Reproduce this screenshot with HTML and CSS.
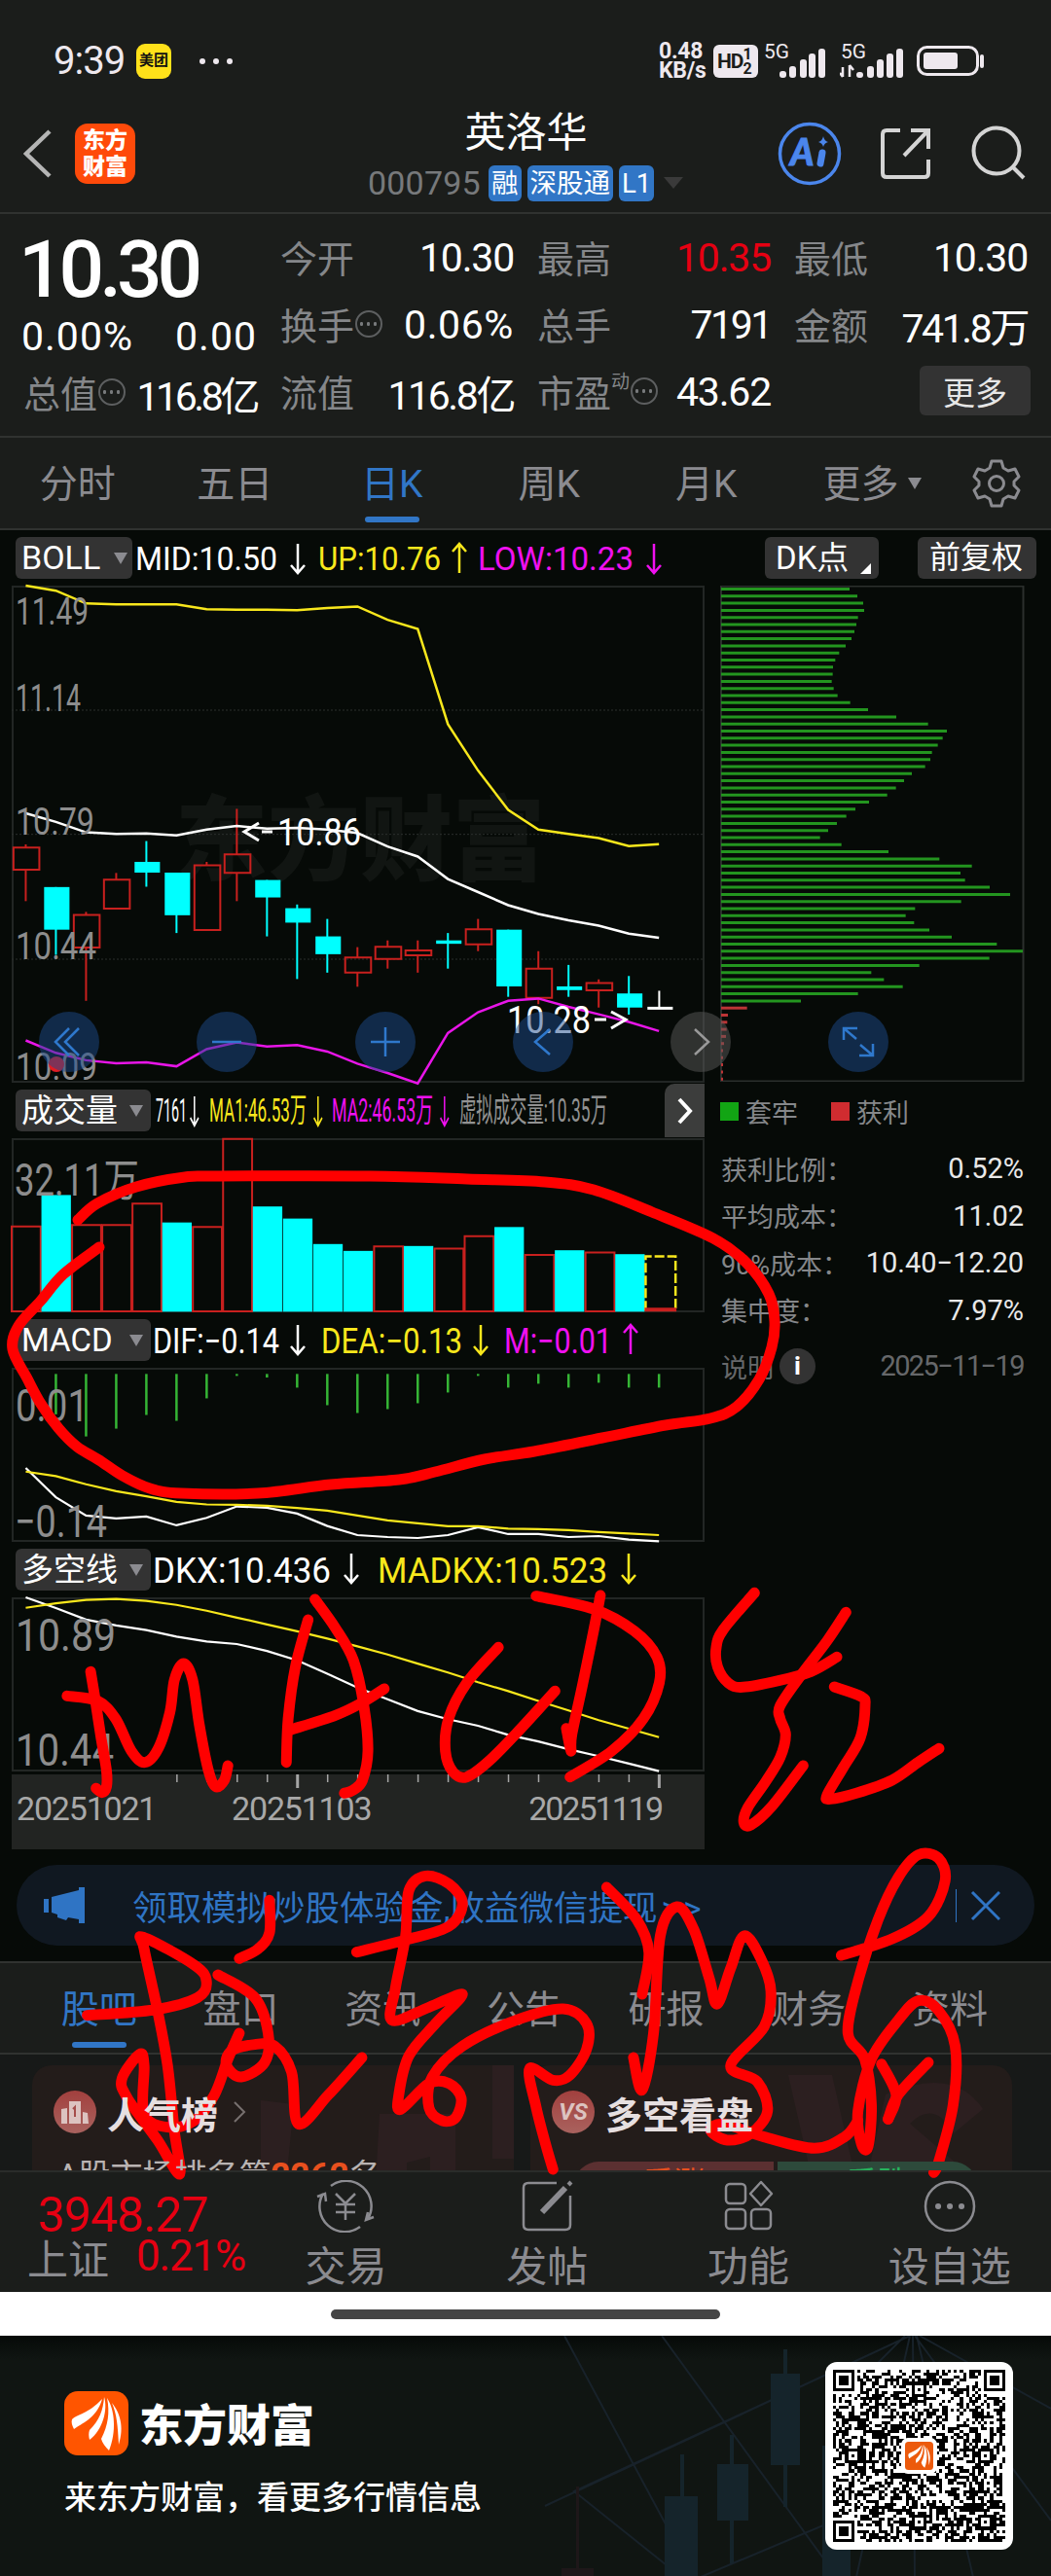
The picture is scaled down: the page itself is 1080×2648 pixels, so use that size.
FILE: index.html
```html
<!DOCTYPE html>
<html lang="zh-CN">
<head>
  <meta charset="UTF-8" />
  <title>英洛华 000795</title>
  <link rel="stylesheet" href="styles.css">
</head>
<body>
  <svg class="defs" width="0" height="0">
    <defs>
      <path id="down" d="M8 0V30M1 22L8 30L15 22" fill="none" stroke="currentColor" stroke-width="2.5" />
      <path id="up" d="M8 30V0M1 8L8 0L15 8" fill="none" stroke="currentColor" stroke-width="2.5" />
      <path id="feather" d="M8 29C14 23 24 24 39 8C34 26 22 31 10 39C8 35 7 32 8 29ZM41 6C45 18 40 40 26 50C25 46 25 43 26 40C36 30 40 20 41 6ZM44 7C52 19 54 42 46 61C42 57 39 53 38 49C45 35 47 22 44 7ZM49 12C57 22 62 36 56 55C55 35 54 24 49 12Z" />
    </defs>
  </svg>

  <div class="status">
    <span class="time">9:39</span>
    <span class="meituan">美团</span>
    <span class="dots"><i></i><i></i><i></i></span>
    <span class="speed">0.48<br>KB/s</span>
    <span class="hd">HD<small>1<br>2</small></span>
    <svg class="signal" width="66" height="42" viewBox="0 0 66 42" fill="#eee8ee">
      <text x="0" y="18" font-size="20" textLength="26">5G</text>
      <rect x="16" y="31" width="7" height="7" rx="3" /><rect x="26" y="26" width="7" height="12" rx="3" /><rect x="37" y="19" width="7" height="19" rx="3" /><rect x="46" y="13" width="7" height="25" rx="3" /><rect x="56" y="8" width="7" height="30" rx="3" />
    </svg>
    <svg class="signal two" width="66" height="42" viewBox="0 0 66 42" fill="#eee8ee">
      <text x="1" y="18" font-size="20" textLength="26">5G</text>
      <path d="M3 27V37M3 37L0 33M10 37V25M10 25L14 30" stroke="#eee8ee" stroke-width="2.5" fill="none" />
      <rect x="17" y="32" width="7" height="6" rx="3" /><rect x="28" y="26" width="7" height="12" rx="3" /><rect x="38" y="19" width="7" height="19" rx="3" /><rect x="48" y="13" width="7" height="25" rx="3" /><rect x="58" y="8" width="7" height="30" rx="3" />
    </svg>
    <svg width="70" height="32" viewBox="0 0 70 32"><rect x="1.5" y="1.5" width="61" height="28" rx="9" fill="none" stroke="#eee8ee" stroke-width="3" /><rect x="7" y="7" width="35" height="17" rx="3" fill="#eee8ee" /><path d="M67 11V21" stroke="#eee8ee" stroke-width="4" stroke-linecap="round" /></svg>
  </div>

  <header class="title">
    <svg class="back" width="30" height="52" viewBox="0 0 30 52"><path d="M27 3L3 26L27 49" fill="none" stroke="#b5b5b5" stroke-width="4.5" /></svg>
    <div class="app-logo">东方<br>财富</div>
    <div class="stock">
      <h1>英洛华</h1>
      <div class="code"><span>000795</span><b>融</b><b>深股通</b><b>L1</b><i class="tri dark"></i></div>
    </div>
    <svg class="tools" width="258" height="70" viewBox="0 0 258 70" fill="none" stroke="#d4d4d4" stroke-width="4">
      <circle cx="33" cy="35" r="30.5" stroke="#4b86ec" stroke-width="3.5" />
      <text class="ai" x="13" y="47">A</text>
      <path d="M46 34L44 45" stroke="#4b86ec" stroke-width="7" stroke-linecap="round" /><path d="M47 17Q48 22 52 23Q48 24 47 28Q46 24 42 23Q46 22 47 17Z" fill="#4b86ec" stroke="none" />
      <path d="M126 11H112Q108 11 108 15V55Q108 59 112 59H151Q155 59 155 55V41M137 11H155V30M154 12L130 37" />
      <circle cx="225" cy="32" r="23.5" /><path d="M242 49L253 60" />
    </svg>
  </header>

  <section class="quote">
    <div class="col first">
      <div class="price">10.30</div>
      <div class="change"><span>0.00%</span><span>0.00</span></div>
      <div class="item"><label>总值</label><i class="more"></i><span class="tight">116.8亿</span></div>
    </div>
    <div class="col">
      <div class="item"><label>今开</label><span>10.30</span></div>
      <div class="item"><label>换手</label><i class="more"></i><span class="loose">0.06%</span></div>
      <div class="item"><label>流值</label><span class="mid">116.8亿</span></div>
    </div>
    <div class="col">
      <div class="item"><label>最高</label><span class="up">10.35</span></div>
      <div class="item"><label>总手</label><span class="mid">7191</span></div>
      <div class="item"><label>市盈<sup>动</sup></label><i class="more"></i><span>43.62</span></div>
    </div>
    <div class="col">
      <div class="item"><label>最低</label><span>10.30</span></div>
      <div class="item"><label>金额</label><span class="mid">741.8万</span></div>
      <div class="item end"><button>更多</button></div>
    </div>
  </section>

  <nav class="tabs">
    <a>分时</a><a>五日</a><a class="on">日K</a><a>周K</a><a>月K</a><a class="last">更多<i class="tri"></i></a>
    <svg width="50" height="50" viewBox="0 0 50 50" fill="none" stroke="#8b8b90" stroke-width="3"><path d="M20 2H30L32 9L37 12L44 10L48 18L43 23V27L48 32L44 40L37 38L32 41L30 48H20L18 41L13 38L6 40L2 32L7 27V23L2 18L6 10L13 12L18 9Z" stroke-linejoin="round" /><circle cx="25" cy="25" r="7.5" /></svg>
  </nav>

  <main class="market">
    <div class="legend boll">
      <button>BOLL<i class="tri"></i></button>
      <svg width="600" height="46" class="values">
        <g color="#fff"><text x="3" y="34" textLength="146">MID:10.50</text><use href="#down" x="162" y="7" /></g>
        <g color="#f8e71c"><text x="191" y="34" textLength="126">UP:10.76</text><use href="#up" x="328" y="7" /></g>
        <g color="#f010f0"><text x="355" y="34" textLength="160">LOW:10.23</text><use href="#down" x="528" y="7" /></g>
      </svg>
      <button class="dk">DK点<i></i></button>
      <button class="fq">前复权</button>
    </div>

    <div class="columns">
      <div class="charts">
        <div class="panel k">
          <div class="watermark">东方财富</div>
          <svg id="kline" viewBox="26 35 1528 1481" preserveAspectRatio="none"></svg>
          <svg class="labels">
            <text x="4" y="40" textLength="75">11.49</text>
            <text x="4" y="129" textLength="67">11.14</text>
            <text x="4" y="256" textLength="81">10.79</text>
            <text x="4" y="384" textLength="83">10.44</text>
            <text x="4" y="508" textLength="84">10.09</text>
            <circle cx="46" cy="492" r="8" fill="#e01c24" />
            <g fill="#fff"><text x="273" y="267" textLength="86">10.86</text><text x="509" y="460" textLength="86">10.28</text></g>
            <path d="M254 244L239 253L254 262M257 253H268M599 446H611M616 438L631 446L616 455" fill="none" stroke="#fff" stroke-width="3" />
          </svg>
          <div class="controls">
            <a><svg viewBox="-31 -31 62 62"><path d="M0 -14L-14 0L0 14M10 -14L-4 0L10 14" /></svg></a>
            <a><svg viewBox="-31 -31 62 62"><path d="M-15 0H15" /></svg></a>
            <a><svg viewBox="-31 -31 62 62"><path d="M-15 0H15M0 -15V15" /></svg></a>
            <a><svg viewBox="-31 -31 62 62"><path d="M7 -13L-8 0L7 13" /></svg></a>
            <a class="gray"><svg viewBox="-31 -31 62 62"><path d="M-6 -13L8 0L-6 13" /></svg></a>
            <a><svg viewBox="-31 -31 62 62"><path d="M-15 -2V-14H-1M-15 -14L-2 -3M15 2V14H1M15 14L2 3" /></svg></a>
          </div>
        </div>

        <div class="legend vol">
          <button>成交量<i class="tri"></i></button>
          <svg width="528" height="50" class="values small">
            <g color="#fff"><text x="5" y="36" textLength="32">7161</text><use href="#down" transform="translate(40 10) scale(.6 1)" /></g>
            <g color="#f8e71c"><text x="60" y="36" textLength="100">MA1:46.53万</text><use href="#down" transform="translate(167 10) scale(.6 1)" /></g>
            <g color="#f010f0"><text x="186" y="36" textLength="104">MA2:46.53万</text><use href="#down" transform="translate(297 10) scale(.6 1)" /></g>
            <g color="#929292"><text x="317" y="36" textLength="152">虚拟成交量:10.35万</text></g>
          </svg>
          <div class="next"><svg width="20" height="30" viewBox="0 0 20 30"><path d="M4 3L15 15L4 27" fill="none" stroke="#fff" stroke-width="4" /></svg></div>
        </div>
        <div class="panel sub">
          <svg id="volume" viewBox="26 180 1528 533" preserveAspectRatio="none"></svg>
          <svg class="labels big"><text x="3" y="59" textLength="128">32.11万</text></svg>
        </div>

        <div class="legend">
          <button>MACD<i class="tri"></i></button>
          <svg width="528" height="46" class="values wide">
            <g color="#fff"><text x="2" y="35" textLength="130">DIF:−0.14</text><use href="#down" x="143" y="6" /></g>
            <g color="#f8e71c"><text x="175" y="35" textLength="145">DEA:−0.13</text><use href="#down" x="331" y="6" /></g>
            <g color="#f010f0"><text x="363" y="35" textLength="111">M:−0.01</text><use href="#up" x="485" y="6" /></g>
          </svg>
        </div>
        <div class="panel sub">
          <svg id="macd" viewBox="26 -283 1528 535" preserveAspectRatio="none"></svg>
          <svg class="labels big"><text x="4" y="55" textLength="75">0.01</text><text x="3" y="174" textLength="95">−0.14</text></svg>
        </div>

        <div class="legend">
          <button>多空线<i class="tri"></i></button>
          <svg width="528" height="46" class="values wide">
            <g color="#fff"><text x="2" y="35" textLength="183">DKX:10.436</text><use href="#down" x="198" y="5" /></g>
            <g color="#f8e71c"><text x="233" y="35" textLength="236">MADKX:10.523</text><use href="#down" x="483" y="5" /></g>
          </svg>
        </div>
        <div class="panel sub">
          <svg id="dkx" viewBox="26 427 1528 533" preserveAspectRatio="none"></svg>
          <svg class="labels big"><text x="4" y="55" textLength="103">10.89</text><text x="4" y="173" textLength="101">10.44</text></svg>
        </div>

        <div class="dates">
          <svg id="ticks" width="711" height="20"></svg>
          <span>20251021</span><span>20251103</span><span>20251119</span>
        </div>
      </div>

      <aside class="chips">
        <svg id="chips" width="313" height="510"></svg>
        <div class="key"><i></i>套牢<i class="red"></i>获利</div>
        <div class="row"><label>获利比例：</label><span>0.52%</span></div>
        <div class="row"><label>平均成本：</label><span>11.02</span></div>
        <div class="row"><label>90%成本：</label><span>10.40−12.20</span></div>
        <div class="row"><label>集中度：</label><span>7.97%</span></div>
        <div class="row note"><label>说明</label><b>i</b><span>2025−11−19</span></div>
      </aside>
    </div>

    <div class="banner">
      <svg width="44" height="38" viewBox="0 0 44 38" fill="#2f74c4"><path d="M0 12H5V26H0ZM8 10L36 3V0H42V37H36V33L25 31L23 34L14 31V28L8 26Z" /></svg>
      <span>领取模拟炒股体验金,收益微信提现<u>&gt;&gt;</u></span>
      <svg class="close" width="46" height="34" viewBox="0 0 46 34" fill="none" stroke="#2f74c4"><path d="M.5 0V34" /><path d="M17 3L45 31M45 3L17 31" stroke-width="3" /></svg>
    </div>
  </main>

  <nav class="tabs lower">
    <a class="on">股吧</a><a>盘口</a><a>资讯</a><a>公告</a><a>研报</a><a>财务</a><a>资料</a>
  </nav>

  <section class="cards">
    <div class="card rank">
      <h2><i><svg width="30" height="26" viewBox="0 0 30 26" fill="#dcc3c0"><path d="M1 10L7 9V25H1ZM9 2H21V25H9ZM23 13L28 14L29 25H23Z" /><path d="M13 10L15 8V18" stroke="#a54d4a" stroke-width="2" fill="none" /></svg></i>人气榜<svg class="gt" width="14" height="24" viewBox="0 0 14 24"><path d="M2 2L12 12L2 22" fill="none" stroke="#77706f" stroke-width="2" /></svg></h2>
      <p>A股市场排名第<em>2262</em>名</p>
      <svg class="art" width="260" height="120"><path d="M0 36L34 40L26 120H0ZM52 0H238V96H260V0ZM122 50H200V120H174V94L150 100V120H118Z" /></svg>
    </div>
    <div class="card vs">
      <h2><i>VS</i>多空看盘</h2>
      <div class="vote"><span>看涨</span><span>看跌</span></div>
      <svg class="art" width="260" height="120"><path d="M30 10H75L100 120H55ZM130 30Q200 0 230 45L200 70Q180 35 155 60L225 120H110Z" /></svg>
    </div>
  </section>

  <footer class="nav">
    <div class="index">
      <i class="tri flip"></i>
      <strong>3948.27</strong>
      <div><span>上证</span><b>0.21%</b></div>
    </div>
    <a><svg viewBox="0 0 60 54"><path d="M15 6A26 26 0 0 1 53 40M45 48A26 26 0 0 1 7 14M1 17L9 14L10 22M59 38L51 41L53 33M20 14L30 24L40 14M30 24V41M20 25H40M20 33H40" /></svg>交易</a>
    <a><svg viewBox="0 0 60 54"><path d="M40 3H11Q6 3 6 8V46Q6 51 11 51H49Q54 51 54 46V16" /><path d="M25 33L49 8" stroke-width="6" /><path d="M52 2L55 5" stroke-width="4" /></svg>发帖</a>
    <a><svg viewBox="0 0 60 54"><rect x="7" y="4" width="20" height="20" rx="4" /><rect x="7" y="30" width="20" height="20" rx="4" /><rect x="33" y="30" width="20" height="20" rx="4" /><path d="M43 2L54 14L43 26L32 14Z" stroke-linejoin="round" /></svg>功能</a>
    <a><svg viewBox="0 0 60 54"><circle cx="30" cy="27" r="25" /><path d="M18 27h.1M30 27h.1M42 27h.1" stroke-width="6" stroke-linecap="round" /></svg>设自选</a>
  </footer>
  <div class="home"><i></i></div>

  <section class="promo">
    <svg class="backdrop" width="1080" height="248" viewBox="0 0 1080 248">
      <g fill="none" stroke="#18222a" stroke-width="2"><path d="M580 0L690 205M680 0L860 248M935 0L560 175M935 0L590 160L700 248M1000 130L720 248M930 0L850 80M935 0L880 248M938 0L940 248M942 0L1000 248M945 0L1080 75M940 0L1080 190" /></g>
      <g fill="#15242b"><path d="M805 14H809V39H822V133H809V176H805V133H792V39H805ZM750 102H754V132H769V190H754V234H750V190H737V132H750ZM845 113H874V248H845ZM699 122H703V165H717V248H683V165H699Z" /></g>
      <path d="M592 155H595V239H610V248H577V239H592Z" fill="#1e1719" />
    </svg>
    <div class="brand">
      <div class="name"><svg width="66" height="66" viewBox="0 0 66 66"><rect width="66" height="66" rx="14" fill="#ff5500" /><use href="#feather" fill="#fff" /></svg>东方财富</div>
      <p>来东方财富，看更多行情信息</p>
    </div>
    <div class="qr">
      <svg id="qr" width="177" height="177" viewBox="0 0 57 57" shape-rendering="crispEdges"></svg>
      <div class="mini"><svg width="29" height="29" viewBox="0 0 66 66"><rect width="66" height="66" rx="8" fill="#ec5a0c" /><use href="#feather" fill="#fff" /></svg></div>
    </div>
  </section>

  <svg id="ink" width="1080" height="2648"></svg>

  <script>
    const STEP = 66.5;
    const RED = '#c8201e';
    const CYAN = '#00ffff';

    const up = [35, 50, 88, 91, 91, 91, 105, 107, 107, 108, 102, 97, 137, 164, 448, 586, 703, 762, 775, 787, 811, 805];
    const mid = [713, 739, 770, 775, 773, 779, 762, 751, 759, 757, 762, 772, 812, 842, 909, 948, 987, 1013, 1032, 1048, 1072, 1084];
    const low = [1390, 1427, 1449, 1458, 1455, 1467, 1416, 1396, 1408, 1404, 1423, 1459, 1487, 1518, 1368, 1306, 1272, 1265, 1290, 1312, 1335, 1362];

    // rising flag, body top, body bottom, high, low
    const candles = [
      [1, 815, 881, 806, 975], [0, 933, 1060, 933, 1135], [1, 1016, 1113, 1007, 1272], [1, 911, 997, 891, 997],
      [0, 858, 890, 796, 932], [0, 890, 1017, 890, 1070], [1, 868, 1061, 858, 1061], [1, 836, 891, 700, 975],
      [0, 912, 964, 912, 1080], [0, 996, 1039, 985, 1207], [0, 1080, 1133, 1028, 1188], [1, 1143, 1188, 1112, 1230],
      [1, 1111, 1147, 1092, 1176], [1, 1122, 1136, 1092, 1188], [0, 1092, 1102, 1070, 1176], [1, 1059, 1104, 1028, 1124],
      [0, 1060, 1229, 1060, 1260], [1, 1176, 1263, 1124, 1282], [0, 1229, 1240, 1165, 1260], [1, 1219, 1241, 1208, 1292],
      [0, 1250, 1292, 1198, 1313]
    ];
    const volumes = [450, 354, 446, 446, 380, 438, 452, 182, 389, 426, 504, 525, 511, 510, 518, 480, 452, 537, 523, 530, 535];
    const volRise = [1, 0, 1, 1, 1, 0, 1, 1, 0, 0, 0, 0, 1, 0, 1, 1, 0, 1, 0, 1, 0];
    const macdBars = [-140, -72, -96, -138, -120, -189, -258, -253, -222, -168, -144, -156, -174, -207, -258, -222, -234, -222, -237, -222, -222];
    const dif = [25, 115, 171, 180, 174, 201, 178, 143, 147, 165, 203, 231, 237, 240, 231, 207, 228, 228, 237, 234, 245, 250];
    const dea = [36, 50, 75, 96, 112, 129, 137, 138, 141, 148, 156, 171, 186, 195, 204, 204, 211, 213, 216, 222, 226, 231];
    const dkx = [427, 460, 495, 513, 527, 547, 562, 570, 591, 620, 661, 703, 739, 775, 800, 820, 848, 868, 892, 913, 936, 959];
    const madkx = [459, 445, 435, 432, 438, 450, 468, 489, 510, 531, 553, 577, 602, 630, 657, 687, 714, 744, 773, 803, 829, 855];
    const trapped = [519, 543, 561, 564, 545, 540, 534, 525, 507, 487, 475, 468, 467, 464, 470, 482, 521, 576, 663, 761, 819, 806, 791, 773, 768, 752, 711, 687, 662, 635, 579, 537, 509, 480, 453, 428, 494, 639, 796, 896, 861, 875, 951, 1014, 863, 721, 692, 718, 765, 834, 973, 1053, 950, 734, 586, 625, 683, 545, 369];
    const profit = [203, 144, 142, 140, 138, 132, 129, 129, 129, 129, 129];

    function $(id) {
      return document.getElementById(id);
    }
    function line(data, color, width) {
      const pts = data.map((y, i) => `${57 + i * STEP},${y}`).join(' ');
      return `<polyline points="${pts}" fill="none" stroke="${color}" stroke-width="${width}" />`;
    }
    function seg(x1, y1, x2, y2, color, width) {
      return `<path d="M${x1} ${y1}L${x2} ${y2}" stroke="${color}" stroke-width="${width}" />`;
    }

    function drawKline() {
      let out = '';
      [406, 776, 1148].forEach(y => {
        out += `<path d="M26 ${y}H1554" stroke="#2c302e" stroke-width="1" stroke-dasharray="2 2" />`;
      });
      candles.forEach(([rise, top, bottom, high, lowest], i) => {
        const x = 57 + i * STEP;
        if (rise) {
          out += seg(x, high, x, top, RED, 2) + seg(x, bottom, x, lowest, RED, 2);
          out += `<rect x="${x - 27}" y="${top}" width="57" height="${bottom - top}" fill="none" stroke="${RED}" stroke-width="2" />`;
        } else {
          out += seg(x, high, x, lowest, CYAN, 2);
          out += `<rect x="${x - 26}" y="${top}" width="56" height="${bottom - top}" fill="${CYAN}" />`;
        }
      });
      out += seg(1454, 1242, 1454, 1294, '#fff', 2) + seg(1428, 1294, 1484, 1294, '#fff', 3);
      out += line(up, '#f8e71c', 2.5) + line(mid, '#fff', 2.5) + line(low, '#e815e8', 2.5);
      $('kline').innerHTML = out;
    }

    function drawVolume() {
      let out = '';
      volumes.forEach((top, i) => {
        const x = 25 + i * 66.6;
        out += volRise[i]
          ? `<rect x="${x + 1}" y="${top}" width="64" height="${710 - top}" fill="none" stroke="${RED}" stroke-width="2" />`
          : `<rect x="${x}" y="${top}" width="65" height="${711 - top}" fill="${CYAN}" />`;
      });
      out += `<path d="M1424 708V542H1490V708" fill="none" stroke="#f8e71c" stroke-width="2.5" stroke-dasharray="10 3" />`;
      out += seg(1422, 705, 1492, 705, RED, 4);
      $('volume').innerHTML = out;
    }

    function drawMacd() {
      let out = '';
      macdBars.forEach((y, i) => {
        const x = 57 + (i + 1) * STEP;
        out += seg(x, -264, x, y, '#35b535', 2.5);
      });
      $('macd').innerHTML = out + line(dif, '#fff', 2.2) + line(dea, '#f8e71c', 2.2);
    }

    function drawTicks() {
      let out = '';
      for (let i = 5; i < 22; i++) {
        const major = i === 9 || i === 21;
        const x = 15 + i * 30.97;
        out += seg(x, 0, x, major ? 14 : 8, '#a5a5a5', major ? 3 : 1.5);
      }
      $('ticks').innerHTML = out;
    }

    function drawChips() {
      let out = '<rect x="1" y=".5" width="310.5" height="509" fill="none" stroke="#2b2f2d" stroke-width="2" />';
      trapped.concat(profit).forEach((end, i) => {
        const y = 3.5 + i * 7.3;
        out += seg(1, y, (end - 120) / 3, y, i < trapped.length ? '#23951f' : '#bd3436', 3);
      });
      $('chips').innerHTML = out;
    }

    function drawQr() {
      const n = 57;
      let seed = 795;
      let d = '';
      for (let y = 0; y < n; y++) {
        for (let x = 0; x < n; x++) {
          seed = (seed * 1103515245 + 12345) % 2147483648;
          const corner = (x < 8 && y < 8) || (x > 48 && y < 8) || (x < 8 && y > 48);
          if (!corner && seed / 2147483648 < 0.5) d += `M${x} ${y}h1v1h-1z`;
        }
      }
      let out = `<path d="${d}" />`;
      const eye = (x, y, size) => {
        out += `<rect x="${x}" y="${y}" width="${size}" height="${size}" /><rect x="${x + 1}" y="${y + 1}" width="${size - 2}" height="${size - 2}" fill="#fff" /><rect x="${x + 2}" y="${y + 2}" width="${size - 4}" height="${size - 4}" />`;
      };
      eye(0, 0, 7); eye(50, 0, 7); eye(0, 50, 7);
      eye(26, 4, 5); eye(4, 26, 5); eye(48, 26, 5); eye(26, 48, 5); eye(48, 48, 5);
      $('qr').innerHTML = out;
    }

    // handwritten notes: origin and scale of each group, then its strokes
    const ink = [
      { x: 0, y: 0, sx: 1, sy: 1, strokes: [
        [80,1254, 100,1237, 140,1220, 190,1210, 225,1209, 380,1209, 480,1212, 560,1215, 610,1223, 670,1246, 733,1273, 767,1298, 790,1330, 796,1358, 793,1385, 780,1418, 757,1446, 730,1458, 684,1465, 619,1478, 549,1492, 498,1500, 447,1513, 410,1521, 340,1526, 265,1535, 186,1535, 154,1530, 126,1517, 102,1501, 79,1487, 60,1468, 42,1443, 28,1417, 13,1387, 19,1363, 42,1337, 65,1310, 102,1282]
      ] },
      { x: 0, y: 1500, sx: .4656, sy: .3333, strokes: [
        [200,655, 210,740, 222,850, 235,960, 235,1010, 225,1028, 212,1015],
        [148,730, 215,745, 255,800, 290,900, 320,935, 350,890, 375,780, 385,680, 405,630, 425,680, 440,820, 460,960, 476,1010, 495,990, 503,945],
        [680,495, 652,640, 636,800, 632,935],
        [695,432, 740,520, 780,620, 803,760, 812,900, 800,990, 780,1020, 760,1030],
        [640,835, 740,790, 800,750, 848,708],
        [1100,580, 1030,690, 990,800, 983,900, 1000,965, 1030,980, 1080,930, 1150,830, 1225,715],
        [1325,420, 1310,530, 1285,700, 1262,850, 1260,900, 1250,830],
        [1183,422, 1310,462, 1400,530, 1450,610, 1455,690, 1420,800, 1350,900, 1258,980]
      ] },
      { x: 700, y: 1580, sx: .3333, sy: .3333, strokes: [
        [226,172, 130,285, 108,340, 112,400, 145,450, 190,463, 300,443, 400,415, 480,370],
        [508,232, 450,320, 370,425, 305,520, 305,560, 322,610, 305,680, 260,755, 205,835, 193,880, 215,888, 280,830, 376,705],
        [472,462, 555,492, 567,520, 552,620, 500,710, 450,795, 460,808, 540,790, 650,750, 730,695, 795,652]
      ] },
      { x: 0, y: 1890, sx: .6888, sy: .3333, strokes: [
        [402,190, 402,290, 385,340, 357,370],
        [130,545, 230,528, 295,490, 308,440, 290,390, 215,305, 215,340, 235,530, 250,700, 260,900, 268,1035, 235,930, 190,800, 182,740, 208,665, 215,700, 215,850, 250,890, 290,870, 320,790, 340,680, 357,600],
        [325,420, 380,490, 400,600, 395,690, 360,735, 338,700, 345,655, 380,635, 410,640, 435,720, 445,880, 490,790, 540,675],
        [532,350, 610,310, 670,270, 690,200, 670,140, 635,115, 610,160, 605,300, 590,460, 585,560, 640,520, 690,480, 650,570, 610,670, 595,790, 598,835, 640,755, 670,755, 688,800, 680,860, 660,870, 640,830, 645,735, 690,640, 770,560, 840,525, 875,570, 875,650, 850,730, 825,745, 790,710, 800,830, 815,950, 825,1020],
        [905,150, 950,250, 968,350, 958,480],
        [945,675, 958,775, 975,600, 985,300, 1010,210, 1035,280, 1058,430, 1070,510, 1090,400, 1110,300, 1135,370, 1150,470, 1140,580, 1090,700, 1130,750, 1145,840, 1120,910, 1085,930, 1060,900, 1080,880, 1140,920, 1215,955, 1260,920, 1280,870],
        [1255,360, 1330,310, 1385,240, 1410,130, 1400,60, 1370,50, 1340,120, 1310,250, 1280,440, 1265,600, 1290,680, 1300,820, 1295,950, 1285,940, 1280,840, 1300,680, 1340,560, 1370,500, 1400,530, 1425,640, 1422,820, 1400,1000, 1393,1030],
        [1315,695, 1337,790, 1325,865],
        [1385,690, 1340,790, 1325,865]
      ] }
    ];

    // Catmull-Rom through the points
    function smooth(p) {
      let d = `M${p[0]}`;
      for (let i = 0; i < p.length - 1; i++) {
        const a = p[i - 1] || p[i], b = p[i], c = p[i + 1], e = p[i + 2] || c;
        d += `C${b[0] + (c[0] - a[0]) / 6},${b[1] + (c[1] - a[1]) / 6} ${c[0] - (e[0] - b[0]) / 6},${c[1] - (e[1] - b[1]) / 6} ${c[0]},${c[1]}`;
      }
      return d;
    }
    function drawInk() {
      let out = '';
      ink.forEach(g => g.strokes.forEach(s => {
        const pts = [];
        for (let i = 0; i < s.length; i += 2) pts.push([g.x + s[i] * g.sx, g.y + s[i + 1] * g.sy]);
        out += `<path d="${smooth(pts)}" />`;
      }));
      $('ink').innerHTML = out;
    }

    // squeeze glyphs together with the gaps
    document.querySelectorAll('text[textLength]').forEach(t => t.setAttribute('lengthAdjust', 'spacingAndGlyphs'));

    drawKline();
    drawVolume();
    drawMacd();
    $('dkx').innerHTML = line(dkx, '#fff', 2.2) + line(madkx, '#f8e71c', 2.2);
    drawTicks();
    drawChips();
    drawQr();
    drawInk();
  </script>
</body>
</html>
```
FILE: styles.css
```css
* {
  box-sizing: border-box;
}
body {
  margin: 0;
  width: 1080px;
  height: 2648px;
  position: relative;
  overflow: hidden;
  background: #1b1d1b;
  color: #fff;
  font-family: Roboto, "Noto Sans CJK SC", sans-serif;
}
svg {
  display: block;
  flex: none;
}
.defs {
  position: absolute;
}
i, em {
  font-style: normal;
}
button {
  border: none;
  border-radius: 6px;
  background: #333;
  color: #fff;
  font-family: inherit;
  padding: 0;
  white-space: nowrap;
}
.tri {
  display: inline-block;
  border: 7px solid transparent;
  border-top: 12px solid #8b8b90;
  border-bottom: 0;
}
.tri.dark {
  border-width: 12px 10px 0;
  border-top-color: #3a3a3a;
  margin-left: 4px;
}
.tri.flip {
  border-width: 0 10px 7px;
  border-bottom-color: #77777a;
}

/* status bar */
.status {
  height: 110px;
  padding: 15px 68px 0 55px;
  display: flex;
  align-items: center;
  color: #eee8ee;
}
.time {
  width: 85px;
  font-size: 40px;
  letter-spacing: -1px;
}
.meituan {
  width: 36px;
  height: 36px;
  border-radius: 9px;
  background: #ffe11a;
  color: #111;
  font-size: 15px;
  font-weight: bold;
  line-height: 35px;
  text-align: center;
}
.dots {
  display: flex;
  gap: 8px;
  margin: 0 auto 0 29px;
}
.dots i {
  width: 6px;
  height: 6px;
  border-radius: 50%;
  background: #eee8ee;
}
.speed {
  width: 49px;
  font-size: 23px;
  font-weight: bold;
  line-height: 20px;
  letter-spacing: -.3px;
  white-space: nowrap;
}
.hd {
  width: 46px;
  height: 34px;
  margin-left: 7px;
  padding-left: 4px;
  border-radius: 6px;
  background: #eee8ee;
  color: #1b1d1b;
  display: flex;
  align-items: center;
  font-size: 21px;
  font-weight: bold;
  letter-spacing: -1px;
}
.hd small {
  font-size: 16px;
  line-height: 15px;
}
.signal {
  margin-left: 6px;
}
.signal.two {
  margin: 0 13px 0 12px;
}

/* title */
.title {
  height: 110px;
  border-bottom: 2px solid #303230;
  padding: 0 24px;
  display: flex;
}
.back {
  margin-top: 22px;
}
.app-logo {
  flex: none;
  width: 62px;
  height: 62px;
  margin: 17px 0 0 23px;
  border-radius: 13px;
  background: #ff4a0a;
  font-size: 23px;
  font-weight: 900;
  line-height: 27px;
  padding-top: 4px;
  text-align: center;
}
.stock {
  flex: none;
  width: 330px;
  margin-left: 239px;
}
h1 {
  margin: 0;
  padding-right: 5px;
  font-size: 42px;
  font-weight: 400;
  line-height: 54px;
  text-align: center;
}
.code {
  display: flex;
  align-items: center;
  gap: 6px;
  margin-top: 5px;
  height: 38px;
  font-size: 34px;
  color: #77797b;
}
.code span {
  width: 118px;
  letter-spacing: .2px;
}
.code b {
  height: 37px;
  padding: 0 3px;
  border-radius: 6px;
  background: #3176c6;
  color: #fff;
  font-size: 27.5px;
  font-weight: 400;
  line-height: 37px;
  white-space: nowrap;
}
.tools {
  margin: 13px 0 0 91px;
}
.ai {
  font: italic 900 37px Lato, sans-serif;
  fill: #4b86ec;
  stroke: #4b86ec;
  stroke-width: 1;
}

/* quote */
.quote {
  height: 230px;
  padding: 9px 24px 0;
  border-bottom: 2px solid #303230;
  display: flex;
  gap: 24px;
}
.col {
  width: 240px;
}
.price {
  height: 92px;
  margin-left: -5px;
  font-size: 82px;
  font-weight: 500;
  line-height: 96px;
  letter-spacing: -5px;
}
.change {
  height: 47px;
  display: flex;
  justify-content: space-between;
  align-items: center;
  padding-top: 3px;
  margin-left: -2px;
  font-size: 41px;
  letter-spacing: 1px;
}
.item {
  height: 69px;
  display: flex;
  align-items: center;
  white-space: nowrap;
}
.item label {
  font-size: 38px;
  color: #85878a;
}
.item span {
  margin-left: auto;
  padding-top: 2px;
  font-size: 41px;
  letter-spacing: -1.2px;
}
.item .tight {
  letter-spacing: -3.4px;
}
.item .mid {
  letter-spacing: -2.4px;
}
.item .loose {
  letter-spacing: .6px;
}
.item .up {
  color: #e60012;
}
.item sup {
  font-size: 19px;
  position: relative;
  top: -5px;
}
.more {
  width: 28px;
  height: 28px;
  margin-left: 1px;
  border: 2px solid #5d5f60;
  border-radius: 50%;
  background: radial-gradient(circle, #77797b 1.7px, transparent 2px) 0 0 / 7px 24px;
  background-origin: content-box;
  background-clip: content-box;
  padding: 0 1px;
}
.item.end button {
  width: 114px;
  height: 51px;
  margin: 0 -3px 0 auto;
  font-size: 33px;
  color: #e6e6e6;
}

/* tabs */
.tabs {
  height: 95px;
  border-bottom: 2px solid #303230;
  display: flex;
  align-items: center;
  font-size: 39px;
  color: #8b8b90;
}
.tabs a {
  width: 161.5px;
  height: 93px;
  line-height: 97px;
  text-align: center;
  position: relative;
  left: -1px;
}
.tabs .last {
  width: 185px;
  padding-right: 6px;
}
.tabs .tri {
  margin: 0 0 8px 9px;
}
.tabs > svg {
  margin-left: 6px;
}
.tabs .on {
  color: #3176c6;
}
.tabs .on::after {
  content: "";
  position: absolute;
  left: 50%;
  bottom: 6px;
  width: 56px;
  height: 6px;
  margin-left: -28px;
  border-radius: 3px;
  background: #3176c6;
}

/* market */
.market {
  height: 1471px;
  background: #060a07;
}
.legend {
  height: 57px;
  padding: 7px 0 0 4px;
  display: flex;
}
.legend button {
  width: 139px;
  height: 43px;
  padding: 0 8px 0 6px;
  display: flex;
  align-items: center;
  justify-content: space-between;
  font-size: 33px;
  line-height: 43px;
}
.values {
  font-size: 34px;
}
.values.wide {
  font-size: 36px;
}
.values text {
  fill: currentColor;
}
.boll {
  padding-left: 16px;
}
.boll button:first-child {
  width: 120px;
  padding-right: 5px;
  font-size: 34px;
}
.legend .dk {
  width: 117px;
  margin-left: 50px;
  padding-left: 11px;
}
.dk i {
  border-left: 11px solid transparent;
  border-bottom: 11px solid #fff;
  margin-top: 22px;
}
.legend .fq {
  width: 122px;
  margin-left: 40px;
  padding-left: 12px;
  font-size: 32px;
}
.columns {
  display: flex;
  height: 1300px;
  padding-left: 12px;
}
.charts {
  width: 712px;
}
.panel {
  position: relative;
  border: 2px solid #222624;
}
.panel > svg {
  position: absolute;
  left: -2px;
  top: -2px;
  width: 712px;
  height: calc(100% + 4px);
  overflow: visible;
}
.panel > svg:not(.labels) * {
  vector-effect: non-scaling-stroke;
}
.panel.k {
  height: 511px;
}
.panel.sub {
  height: 179px;
}
.labels {
  font-size: 38px;
  fill: #8d8d8d;
}
.labels.big {
  font-size: 46px;
}
.watermark {
  position: absolute;
  left: 166px;
  top: 184px;
  font-size: 95px;
  font-weight: 900;
  color: #111512;
}
.controls {
  position: absolute;
  left: 26px;
  top: 436px;
  display: flex;
  gap: 100.3px;
}
.controls a {
  width: 62px;
  height: 62px;
  border-radius: 50%;
  background: rgba(28, 74, 140, .5);
}
.controls .gray {
  background: rgba(90, 90, 90, .5);
}
.controls path {
  fill: none;
  stroke: #2f78cc;
  stroke-width: 2.5;
}
.controls .gray path {
  stroke: #999;
}
.vol .values {
  margin-top: -3px;
  font-size: 34px;
}
.vol .next {
  width: 41px;
  height: 55px;
  margin: -6px 0 0 0;
  border-radius: 10px 0 0 0;
  background: #3c3d3c;
  display: flex;
  align-items: center;
  justify-content: center;
}
.dates {
  height: 77px;
  margin-top: 3px;
  background: #222422;
  position: relative;
  display: flex;
  padding: 15px 44px 0 5px;
  justify-content: space-between;
  font-size: 34px;
  letter-spacing: -1.2px;
  color: #a8a8a8;
}
.dates svg {
  position: absolute;
  left: 0;
  top: 0;
}
.dates span:nth-of-type(2) {
  margin-right: 84px;
}
.dates span:last-child {
  letter-spacing: -2px;
}
.chips {
  width: 313px;
  margin-left: 16px;
  color: #85878a;
  font-size: 27px;
}
.key {
  height: 61px;
  display: flex;
  align-items: center;
}
.key i {
  width: 19px;
  height: 19px;
  margin-right: 7px;
  background: #12a514;
}
.key .red {
  margin-left: 34px;
  background: #d02c30;
}
.chips .row {
  height: 48.5px;
  padding: 8px 1px 0 1px;
  display: flex;
  align-items: center;
  white-space: nowrap;
}
.row span {
  margin-left: auto;
  color: #e8e8e8;
  font-size: 29px;
}
.row.note {
  height: 66px;
  color: #66686a;
}
.row.note span {
  color: #66686a;
  letter-spacing: -1.6px;
}
.row b {
  width: 37px;
  height: 37px;
  margin-left: 6px;
  border-radius: 50%;
  background: #333;
  color: #fff;
  font-size: 26px;
  line-height: 37px;
  text-align: center;
}
.banner {
  width: 1046px;
  height: 83px;
  margin: 15px 0 0 17px;
  padding: 0 35px 0 28px;
  border-radius: 42px;
  background: #101821;
  color: #2f74c4;
  display: flex;
  align-items: center;
  font-size: 35.5px;
}
.banner span {
  margin-left: 47px;
}
.banner u {
  text-decoration: none;
  letter-spacing: 4px;
  margin-left: 4px;
}
.banner .close {
  margin-left: auto;
}

/* lower tabs and cards */
.lower {
  height: 96px;
  border-top: 2px solid #303230;
  padding: 0 30px;
}
.lower a {
  width: 145.7px;
}
.cards {
  height: 119px;
  padding: 11px 33px 0;
  overflow: hidden;
  background: #171918;
  display: flex;
  gap: 17px;
}
.card {
  width: 495px;
  height: 200px;
  padding: 18px 22px;
  border-radius: 20px;
  background: #231c1a;
  position: relative;
}
.card h2 {
  margin: 0;
  height: 60px;
  display: flex;
  align-items: center;
  font-size: 38px;
  color: #e6dfe0;
}
.card h2 i {
  width: 44px;
  height: 44px;
  margin-right: 11px;
  border-radius: 50%;
  background: linear-gradient(#a2403e, #a9625e);
  color: #dcc3c0;
  display: flex;
  align-items: center;
  justify-content: center;
  font-size: 24px;
  font-style: italic;
}
.gt {
  margin-left: 15px;
}
.card p {
  margin: 16px 0 0 4px;
  font-size: 33px;
  line-height: 40px;
  white-space: nowrap;
  color: #b9b3b2;
}
.card em {
  font-size: 35px;
  color: #e8501e;
  font-weight: bold;
}
.art {
  position: absolute;
  right: 0;
  top: 0;
  fill: #2c1f20;
  z-index: 0;
}
.card h2, .card p, .vote {
  position: relative;
  z-index: 1;
}
.vote {
  display: flex;
  gap: 4px;
  margin: 21px 0 0 23px;
}
.vote span {
  width: 205px;
  height: 50px;
  border-radius: 25px 0 0 0;
  background: #5b3031;
  color: #e8501e;
  font-size: 32px;
  line-height: 44px;
  text-align: center;
}
.vote span + span {
  border-radius: 0 25px 0 0;
  background: #2d4a3b;
  color: #27b35c;
}

/* bottom nav */
.nav {
  height: 125px;
  border-top: 2px solid #2a2c2a;
  display: flex;
  color: #8b8b90;
}
.index {
  width: 252px;
  height: 122px;
  padding-left: 28px;
  position: relative;
}
.index .tri {
  position: absolute;
  left: 117px;
  top: 8px;
}
.index strong {
  display: block;
  margin: 18px 0 0 11px;
  font-size: 50px;
  font-weight: 400;
  line-height: 52px;
  letter-spacing: -1px;
  color: #e60012;
}
.index div {
  display: flex;
  justify-content: space-between;
  align-items: center;
  height: 36px;
  font-size: 42px;
}
.index b {
  font-size: 44px;
  font-weight: 400;
  letter-spacing: -1.2px;
  color: #e60012;
}
.index div > * {
  position: relative;
  top: -2px;
}
.nav a {
  width: 206.8px;
  padding-top: 8px;
  display: flex;
  flex-direction: column;
  align-items: center;
  font-size: 42px;
  line-height: 64px;
}
.nav a svg {
  width: 60px;
  height: 54px;
  margin-bottom: 4px;
  fill: none;
  stroke: #8b8b90;
  stroke-width: 2.5;
}
.home {
  height: 45px;
  background: #fff;
  padding-top: 18px;
}
.home i {
  display: block;
  width: 400px;
  height: 10px;
  margin: 0 auto;
  border-radius: 5px;
  background: #444;
}

/* promo */
.promo {
  height: 248px;
  background: linear-gradient(#060a08, #101512 24px);
  position: relative;
  display: flex;
  justify-content: space-between;
  padding: 27px 39px 0 66px;
}
.backdrop {
  position: absolute;
  left: 0;
  top: 0;
}
.brand, .qr {
  position: relative;
}
.brand .name {
  margin-top: 31px;
  display: flex;
  gap: 11px;
  align-items: center;
  height: 66px;
  padding-bottom: 3px;
  font-size: 45px;
  font-weight: 900;
}
.brand p {
  margin: 18px 0 0 0;
  font-size: 33px;
  line-height: 50px;
  font-weight: 500;
}
.qr {
  width: 193px;
  height: 193px;
  padding: 8px;
  border-radius: 12px;
  background: #fff;
}
.mini {
  position: absolute;
  left: 78px;
  top: 78px;
  padding: 4px;
  border-radius: 7px;
  background: #fff;
}

#ink {
  position: absolute;
  left: 0;
  top: 0;
  fill: none;
  stroke: #f00;
  stroke-width: 11;
  stroke-linecap: round;
  stroke-linejoin: round;
  pointer-events: none;
}
```
